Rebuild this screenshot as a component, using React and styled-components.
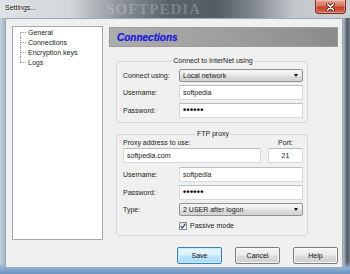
import React from 'react';
import styled, { createGlobalStyle, css } from 'styled-components';

const GlobalStyle = createGlobalStyle`
  html, body { margin:0; padding:0; }
  body {
    width:350px; height:274px; overflow:hidden;
    font-family:"Liberation Sans", Arial, sans-serif;
    font-size:7px; color:#1a1a1a;
  }
  * { box-sizing:border-box; }
`;

const Window = styled.div`
  width:350px; height:274px;
  display:flex; flex-direction:column;
  background:
    linear-gradient(180deg, rgba(0,0,0,0) 0, rgba(0,0,0,0) 262px, #8fb0d4 268px, #6a8fba 274px),
    linear-gradient(90deg, #c6d2de 0, #a9bccf 4px, #c9d2dc 50%, #a9b3bd calc(100% - 6px), #4e5862 calc(100% - 3px), #76818c 100%);
`;

const TitleBar = styled.div`
  height:18px; flex:none;
  display:flex; align-items:flex-start;
  padding:0 4px 0 5px;
  background:linear-gradient(90deg, #dfe2e5 0%, #d3d7da 20%, #8d939a 34%, #5b626a 48%, #555c64 62%, #7e858c 72%, #c4c8cb 84%, #cdd0d3 100%);
`;

const Title = styled.span`
  margin-top:4px;
  font-size:7px; color:#111;
  text-shadow:0 0 4px #fff, 0 0 2px #fff;
`;

const Watermark = styled.span`
  margin:1px 0 0 70px;
  font-family:"Liberation Serif", serif; font-weight:bold;
  font-size:15px; letter-spacing:1px;
  color:rgba(255,255,255,0.22);
`;

const CloseButton = styled.div`
  margin-left:auto;
  width:31px; height:14px;
  display:flex; align-items:center; justify-content:center;
  border:1px solid #7c2b22; border-top:none;
  border-radius:0 0 4px 4px;
  background:linear-gradient(180deg, #e9a799 0%, #d8705e 45%, #c4402e 55%, #d26a4e 100%);
  box-shadow:inset 0 0 0 1px rgba(255,255,255,0.3);
`;

const Frame = styled.div`
  flex:1; display:flex;
  padding:0 7px 6px 5px;
`;

const Client = styled.div`
  flex:1;
  display:flex; flex-direction:column;
  background:#f0f0f0;
  border:1px solid #9aa7b4;
  padding:7px 4px 3px 6px;
`;

const Body = styled.div`
  display:flex; gap:6px;
  height:214px;
`;

const Tree = styled.div`
  width:91px; height:100%;
  background:#fff;
  border:1px solid #a4a8ae;
  padding:0 0 0 7px;
`;

const TreeItem = styled.div`
  position:relative;
  height:10px;
  display:flex; align-items:center;
  padding-left:8px;
  white-space:nowrap;
  &::before {
    content:""; position:absolute; left:0; top:5px;
    width:6px; border-top:1px dotted #9a9a9a;
  }
  &::after {
    content:""; position:absolute; left:0;
    border-left:1px dotted #9a9a9a;
    ${p => p.$pos === 'first' && css`top:5px; bottom:0;`}
    ${p => p.$pos === 'mid' && css`top:0; bottom:0;`}
    ${p => p.$pos === 'last' && css`top:0; height:5px;`}
  }
`;

const Panel = styled.div`
  width:229px;
  display:flex; flex-direction:column;
`;

const Header = styled.div`
  margin-top:1px;
  height:20px;
  display:flex; align-items:center;
  padding-left:7px;
  border:1px solid #9c9c9c;
  background:linear-gradient(90deg, #adadad 0%, #9d9d9d 55%, #8b8b8b 100%);
  font-size:10px; font-weight:bold; font-style:italic;
  color:#1717f0;
  text-shadow:0 0 1px rgba(0,0,60,0.35);
`;

const Group = styled.fieldset`
  margin:${p => p.$top}px 0 0 7px;
  width:192px; min-width:0;
  border:1px solid #d4d8dc;
  border-radius:3px;
  padding:${p => p.$padTop}px 4px ${p => p.$padBottom}px 6px;
  display:flex; flex-direction:column;
`;

const Legend = styled.legend`
  margin:0 auto;
  padding:0 2px;
  font-size:7px; line-height:8px;
  color:#1a1a1a;
`;

const FormGrid = styled.div`
  display:grid;
  grid-template-columns:56px 124px;
  row-gap:3px;
  align-items:center;
`;

const Label = styled.span`
  white-space:nowrap;
  color:#222;
`;

const TextBox = styled.div`
  height:15px;
  display:flex; align-items:center;
  padding:0 3px;
  background:#fff;
  border:1px solid #d6dadf;
  border-top-color:#b9bdc4;
  border-radius:1px;
  white-space:nowrap;
  ${p => p.$center && css`justify-content:center;`}
`;

const Dots = styled.span`
  font-size:9px; font-weight:bold;
  letter-spacing:0.3px; color:#000;
  line-height:9px;
`;

const Select = styled.div`
  height:13px;
  display:flex; align-items:center; justify-content:space-between;
  padding:0 4px 0 3px;
  border:1px solid #8f9193;
  border-radius:2px;
  background:linear-gradient(180deg, #f6f6f6 0%, #ececec 48%, #dedede 52%, #d2d2d2 100%);
  white-space:nowrap;
`;

const Arrow = styled.span`
  width:0; height:0;
  border-left:2.5px solid transparent;
  border-right:2.5px solid transparent;
  border-top:3px solid #111;
`;

const ProxyGrid = styled.div`
  display:grid;
  grid-template-columns:138px 35px;
  column-gap:7px;
  grid-template-rows:9px 15px;
  row-gap:1px;
  margin-bottom:4px;
  align-items:center;
`;

const CenterLabel = styled(Label)`
  text-align:center;
`;

const CheckRow = styled.div`
  grid-column:2;
  margin-top:2px;
  display:flex; align-items:center; gap:3px;
  height:9px;
`;

const CheckBox = styled.div`
  width:8px; height:8px;
  display:flex; align-items:center; justify-content:center;
  border:1px solid #8e8f8f;
  background:linear-gradient(180deg, #e4e4e4, #fafafa);
`;

const ButtonRow = styled.div`
  margin-top:7px;
  display:flex; justify-content:flex-end; gap:13px;
`;

const Button = styled.div`
  width:45px; height:17px;
  display:flex; align-items:center; justify-content:center;
  border:1px solid #7d7d7d;
  border-radius:2px;
  background:linear-gradient(180deg, #f3f3f3 0%, #ebebeb 48%, #dcdcdc 52%, #cfcfcf 100%);
  box-shadow:inset 0 0 0 1px rgba(255,255,255,0.7);
  color:#111;
  ${p => p.$default && css`
    border-color:#3c7fb1;
    background:linear-gradient(180deg, #eaf6fd 0%, #d9f0fc 48%, #bee6fd 52%, #a7d9f5 100%);
    box-shadow:inset 0 0 0 1px #c8ecfb;
  `}
`;

const treeItems = ['General', 'Connections', 'Encryption keys', 'Logs'];

export default function App() {
  return (
    <>
      <GlobalStyle />
      <Window>
        <TitleBar>
          <Title>Settings...</Title>
          <Watermark>SOFTPEDIA</Watermark>
          <CloseButton>
            <svg width="9" height="8" viewBox="0 0 9 8">
              <path d="M1.5 1 L7.5 7 M7.5 1 L1.5 7" stroke="#3a1410" strokeWidth="3" strokeLinecap="round" />
              <path d="M1.5 1 L7.5 7 M7.5 1 L1.5 7" stroke="#fff" strokeWidth="1.6" strokeLinecap="round" />
            </svg>
          </CloseButton>
        </TitleBar>
        <Frame>
          <Client>
            <Body>
              <Tree>
                {treeItems.map((t, i) => (
                  <TreeItem key={t} $pos={i === 0 ? 'first' : i === treeItems.length - 1 ? 'last' : 'mid'}>
                    {t}
                  </TreeItem>
                ))}
              </Tree>
              <Panel>
                <Header>Connections</Header>
                <Group $top={10} $padTop={4} $padBottom={4}>
                  <Legend>Connect to InterNet using</Legend>
                  <FormGrid>
                    <Label>Connect using:</Label>
                    <Select>Local network<Arrow /></Select>
                    <Label>Username:</Label>
                    <TextBox>softpedia</TextBox>
                    <Label>Password:</Label>
                    <TextBox><Dots>••••••</Dots></TextBox>
                  </FormGrid>
                </Group>
                <Group $top={7} $padTop={0} $padBottom={5}>
                  <Legend>FTP proxy</Legend>
                  <ProxyGrid>
                    <Label>Proxy address to use:</Label>
                    <CenterLabel>Port:</CenterLabel>
                    <TextBox>softpedia.com</TextBox>
                    <TextBox $center>21</TextBox>
                  </ProxyGrid>
                  <FormGrid>
                    <Label>Username:</Label>
                    <TextBox>softpedia</TextBox>
                    <Label>Password:</Label>
                    <TextBox><Dots>••••••</Dots></TextBox>
                    <Label>Type:</Label>
                    <Select>2 USER after logon<Arrow /></Select>
                    <CheckRow>
                      <CheckBox>
                        <svg width="6" height="6" viewBox="0 0 6 6">
                          <path d="M0.6 3.2 L2.3 5 L5.4 0.8" fill="none" stroke="#2d4a8a" strokeWidth="1.2" />
                        </svg>
                      </CheckBox>
                      <span>Passive mode</span>
                    </CheckRow>
                  </FormGrid>
                </Group>
              </Panel>
            </Body>
            <ButtonRow>
              <Button $default>Save</Button>
              <Button>Cancel</Button>
              <Button>Help</Button>
            </ButtonRow>
          </Client>
        </Frame>
      </Window>
    </>
  );
}
